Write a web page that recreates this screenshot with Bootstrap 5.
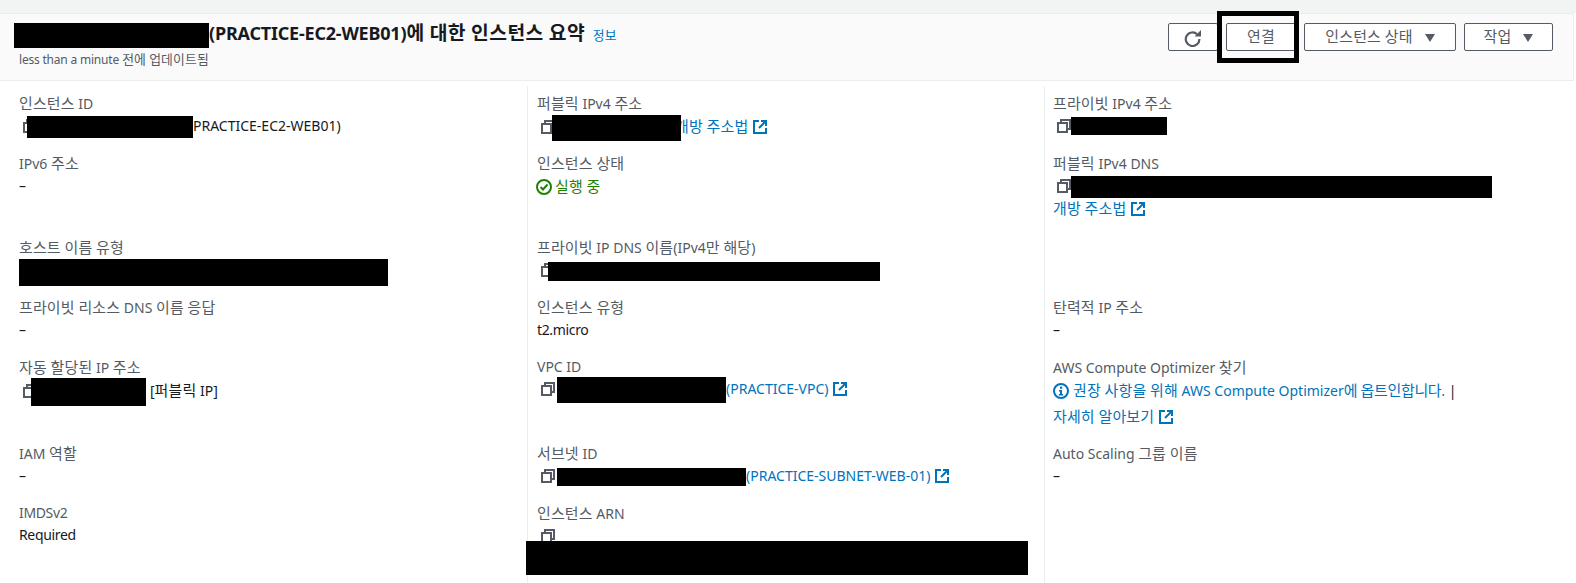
<!DOCTYPE html>
<html lang="ko">

<head>
  <meta charset="UTF-8" />
  <meta name="viewport" content="width=device-width, initial-scale=1.0" />
  <title>인스턴스 요약</title>
  <link href="https://cdn.jsdelivr.net/npm/bootstrap@5.3.0/dist/css/bootstrap.min.css" rel="stylesheet" />
  <script src="https://cdn.jsdelivr.net/npm/bootstrap@5.3.0/dist/js/bootstrap.bundle.min.js"></script>
  <style>
    html,
    body {
      height: 100%;
      overflow: hidden;
    }

    body {
      background: #fff;
      font-family: "Noto Sans", "Noto Sans CJK KR", sans-serif;
      font-size: 14px;
      line-height: 22px;
      color: #16191f;
    }

    a {
      color: #0073bb;
      text-decoration: none;
    }

    /* hangul runs: the reference font sets them about 1em wide */
    .ko {
      font-size: 1.07em;
      letter-spacing: .01em;
      word-spacing: -.02em;
    }

    .ko-tight {
      letter-spacing: -.3px;
    }

    .lat-tight {
      letter-spacing: -.35px;
    }

    .top-strip {
      height: 12.5px;
      background: #f2f3f3;
    }

    .summary-head {
      height: 68px;
      background: #fafafa;
      border-top: 1px solid #eaeded;
      border-bottom: 1px solid #eaeded;
      border-right: 1px solid #eaeded;
      margin-right: 2px;
      padding: 8px 20px 0 14px;
    }

    .summary-title {
      font-size: 18px;
      line-height: 22px;
      font-weight: 700;
      margin: 0;
    }

    .title-latin {
      letter-spacing: -.2px;
    }

    .title-ko {
      letter-spacing: .024em;
    }

    .info-link {
      font-size: 12px;
      font-weight: 400;
      margin-left: 3px;
    }

    .updated {
      font-size: 12px;
      line-height: 16px;
      color: #545b64;
      margin: 4px 0 0 5px;
    }

    .updated-latin {
      letter-spacing: -.2px;
    }

    .head-actions {
      margin-top: 1px;
    }

    .aws-btn {
      height: 28px;
      padding: 0 0 4px;
      background: #fff;
      border: 1px solid #545b64;
      border-radius: 2px;
      color: #545b64;
      font-size: 14px;
      line-height: 24px;
    }

    .btn-reload {
      width: 50px;
      padding: 1px 0 0;
    }

    .btn-connect {
      width: 70px;
    }

    .btn-state {
      width: 152px;
    }

    .btn-action {
      width: 89px;
    }

    .caret-down {
      display: inline-block;
      width: 0;
      height: 0;
      margin-left: 12px;
      border-left: 5.5px solid transparent;
      border-right: 5.5px solid transparent;
      border-top: 8px solid #545b64;
    }

    .callout-wrap {
      position: relative;
    }

    /* black marker drawn over the connect button */
    .callout-wrap::after {
      content: "";
      position: absolute;
      left: -9px;
      top: -12px;
      width: 82px;
      height: 52px;
      border: 5px solid #000;
    }

    .detail-grid {
      display: grid;
      grid-template-columns: 527px 517px 1fr;
      grid-template-rows: 59px 84px 60px 60px 86px 60px 1fr;
      margin-top: 5px;
      height: 497px;
    }

    .fld {
      padding: 7px 0 7px 19px;
      min-width: 0;
    }

    .fld-first {
      padding-top: 6px;
    }

    .fld-b {
      border-left: 1px solid #eaeded;
      padding-left: 9px;
    }

    .fld-c {
      border-left: 1px solid #eaeded;
      padding-left: 8px;
    }

    .fld-label {
      color: #545b64;
    }

    .fld-val {
      white-space: nowrap;
    }

    .link-line {
      line-height: 23px;
    }

    .learn-line {
      margin-top: 3px;
    }

    .copy-ic {
      width: 14px;
      height: 14px;
      margin-left: 4px;
      vertical-align: -2px;
    }

    .ext-ic {
      width: 14px;
      height: 14px;
      margin-left: 5px;
      vertical-align: -2px;
    }

    .state-ic {
      width: 16px;
      height: 16px;
      margin-right: 4px;
      vertical-align: -3px;
    }

    .ok-ic {
      margin-left: -1px;
      margin-right: 3px;
    }

    .text-run {
      color: #1d8102;
    }

    /* redacted values: black blocks which keep the line height at 22px */
    .mask {
      display: inline-block;
      position: relative;
      background: #000;
      vertical-align: top;
    }

    .mask-title {
      width: 195px;
      height: 25px;
      margin: 1px 0 -4px 0;
    }

    .mask-inst {
      width: 166px;
      height: 22px;
      margin: 1px 0 -1px -10px;
    }

    .mask-pub4 {
      width: 129px;
      height: 26px;
      margin: 0 0 -4px -3px;
    }

    .mask-priv4 {
      width: 96px;
      height: 18px;
      margin: 2px 0 2px 0;
    }

    .mask-pubdns {
      width: 421px;
      height: 22px;
      margin: 1px 0 -1px 0;
    }

    .mask-host {
      display: block;
      width: 369px;
      height: 27px;
      margin: 0 0 -5px 0;
    }

    .mask-privdns {
      width: 332px;
      height: 19px;
      margin: 3px 0 0 -7px;
    }

    .mask-auto {
      width: 115px;
      height: 28px;
      margin: -1px 4px -5px -6px;
    }

    .mask-vpc {
      width: 169px;
      height: 26px;
      margin: -1px 0 -3px 2px;
    }

    .mask-subnet {
      width: 189px;
      height: 18px;
      margin: 3px 0 1px 2px;
    }

    .mask-arn {
      display: block;
      width: 502px;
      height: 34px;
      margin: -6px 0 0 -11px;
    }

    .under-mask {
      margin-left: -6px;
    }
  </style>
</head>

<body>
  <div class="top-strip"></div>

  <div class="summary-head d-flex justify-content-between">
    <div>
      <h1 class="summary-title"><span class="mask mask-title"></span><span class="title-latin">(PRACTICE-EC2-WEB01)</span><span class="ko title-ko">에 대한 인스턴스 요약</span> <a href="#" class="info-link"><span class="ko">정보</span></a></h1>
      <p class="updated"><span class="updated-latin">less than a minute</span> <span class="ko">전에 업데이트됨</span></p>
    </div>
    <div class="d-flex gap-2 head-actions">
      <button type="button" class="aws-btn btn-reload">
        <svg width="18" height="18" viewBox="0 0 18 18" fill="none">
          <path d="M13.2 5.2A6.8 6.8 0 1 0 15.4 10" stroke="#545b64" stroke-width="2.2" />
          <path d="M17 1v6.4h-6.4z" fill="#545b64" />
        </svg>
      </button>
      <div class="callout-wrap"><button type="button" class="aws-btn btn-connect"><span class="ko">연결</span></button></div>
      <button type="button" class="aws-btn btn-state"><span class="ko">인스턴스 상태</span><span class="caret-down"></span></button>
      <button type="button" class="aws-btn btn-action"><span class="ko">작업</span><span class="caret-down"></span></button>
    </div>
  </div>

  <div class="detail-grid">
    <!-- row 1 -->
    <div class="fld fld-first">
      <div class="fld-label"><span class="ko">인스턴스</span> ID</div>
      <div class="fld-val"><svg class="copy-ic" viewBox="0 0 14 14" fill="none" stroke="#545b64" stroke-width="2"><rect x="1" y="4" width="9" height="9" /><path d="M4 3V1h9v9h-2" /></svg><span class="mask mask-inst"></span>PRACTICE-EC2-WEB01)</div>
    </div>
    <div class="fld fld-b fld-first">
      <div class="fld-label"><span class="ko">퍼블릭</span> IPv4 <span class="ko">주소</span></div>
      <div class="fld-val"><svg class="copy-ic" viewBox="0 0 14 14" fill="none" stroke="#545b64" stroke-width="2"><rect x="1" y="4" width="9" height="9" /><path d="M4 3V1h9v9h-2" /></svg><span class="mask mask-pub4"></span><a href="#" class="under-mask"><span class="ko">개방 주소법</span><svg class="ext-ic" viewBox="0 0 14 14" fill="none" stroke="#0073bb" stroke-width="2"><path d="M6 1H1v12h12V8" /><path d="M8 1h5v5M13 1L6 8" /></svg></a></div>
    </div>
    <div class="fld fld-c fld-first">
      <div class="fld-label"><span class="ko">프라이빗</span> IPv4 <span class="ko">주소</span></div>
      <div class="fld-val"><svg class="copy-ic" viewBox="0 0 14 14" fill="none" stroke="#545b64" stroke-width="2"><rect x="1" y="4" width="9" height="9" /><path d="M4 3V1h9v9h-2" /></svg><span class="mask mask-priv4"></span></div>
    </div>

    <!-- row 2 -->
    <div class="fld">
      <div class="fld-label">IPv6 <span class="ko">주소</span></div>
      <div class="fld-val">–</div>
    </div>
    <div class="fld fld-b">
      <div class="fld-label"><span class="ko">인스턴스 상태</span></div>
      <div class="fld-val text-run"><svg class="state-ic ok-ic" viewBox="0 0 16 16" fill="none" stroke="#1d8102" stroke-width="2"><circle cx="8" cy="8" r="7" /><path d="M4.5 8l2.5 2.5L11.5 5.5" /></svg><span class="ko">실행 중</span></div>
    </div>
    <div class="fld fld-c">
      <div class="fld-label"><span class="ko">퍼블릭</span> IPv4 DNS</div>
      <div class="fld-val"><svg class="copy-ic" viewBox="0 0 14 14" fill="none" stroke="#545b64" stroke-width="2"><rect x="1" y="4" width="9" height="9" /><path d="M4 3V1h9v9h-2" /></svg><span class="mask mask-pubdns"></span></div>
      <div class="link-line"><a href="#"><span class="ko">개방 주소법</span><svg class="ext-ic" viewBox="0 0 14 14" fill="none" stroke="#0073bb" stroke-width="2"><path d="M6 1H1v12h12V8" /><path d="M8 1h5v5M13 1L6 8" /></svg></a></div>
    </div>

    <!-- row 3 -->
    <div class="fld">
      <div class="fld-label"><span class="ko">호스트 이름 유형</span></div>
      <div class="fld-val"><span class="mask mask-host"></span></div>
    </div>
    <div class="fld fld-b">
      <div class="fld-label"><span class="ko">프라이빗</span> IP DNS <span class="ko">이름</span>(IPv4<span class="ko">만 해당</span>)</div>
      <div class="fld-val"><svg class="copy-ic" viewBox="0 0 14 14" fill="none" stroke="#545b64" stroke-width="2"><rect x="1" y="4" width="9" height="9" /><path d="M4 3V1h9v9h-2" /></svg><span class="mask mask-privdns"></span></div>
    </div>
    <div class="fld fld-c"></div>

    <!-- row 4 -->
    <div class="fld">
      <div class="fld-label"><span class="ko">프라이빗 리소스</span> DNS <span class="ko">이름 응답</span></div>
      <div class="fld-val">–</div>
    </div>
    <div class="fld fld-b">
      <div class="fld-label"><span class="ko">인스턴스 유형</span></div>
      <div class="fld-val lat-tight">t2.micro</div>
    </div>
    <div class="fld fld-c">
      <div class="fld-label"><span class="ko">탄력적</span> IP <span class="ko">주소</span></div>
      <div class="fld-val">–</div>
    </div>

    <!-- row 5 -->
    <div class="fld">
      <div class="fld-label"><span class="ko">자동 할당된</span> IP <span class="ko">주소</span></div>
      <div class="fld-val"><svg class="copy-ic" viewBox="0 0 14 14" fill="none" stroke="#545b64" stroke-width="2"><rect x="1" y="4" width="9" height="9" /><path d="M4 3V1h9v9h-2" /></svg><span class="mask mask-auto"></span>[<span class="ko">퍼블릭</span> IP]</div>
    </div>
    <div class="fld fld-b">
      <div class="fld-label">VPC ID</div>
      <div class="fld-val"><svg class="copy-ic" viewBox="0 0 14 14" fill="none" stroke="#545b64" stroke-width="2"><rect x="1" y="4" width="9" height="9" /><path d="M4 3V1h9v9h-2" /></svg><span class="mask mask-vpc"></span><a href="#">(PRACTICE-VPC)<svg class="ext-ic" viewBox="0 0 14 14" fill="none" stroke="#0073bb" stroke-width="2"><path d="M6 1H1v12h12V8" /><path d="M8 1h5v5M13 1L6 8" /></svg></a></div>
    </div>
    <div class="fld fld-c">
      <div class="fld-label">AWS Compute Optimizer <span class="ko">찾기</span></div>
      <div class="fld-val"><a href="#"><svg class="state-ic" viewBox="0 0 16 16"><circle cx="8" cy="8" r="7" fill="none" stroke="#0073bb" stroke-width="2" /><rect x="7" y="3.6" width="2.2" height="2.2" fill="#0073bb" /><path d="M6 7h3v4h1.2v1.4H5.8V11H7V8.4H6z" fill="#0073bb" /></svg><span class="ko">권장 사항을 위해</span> AWS Compute Optimizer<span class="ko ko-tight">에 옵트인합니다</span>.</a> |</div>
      <div class="learn-line"><a href="#"><span class="ko">자세히 알아보기</span><svg class="ext-ic" viewBox="0 0 14 14" fill="none" stroke="#0073bb" stroke-width="2"><path d="M6 1H1v12h12V8" /><path d="M8 1h5v5M13 1L6 8" /></svg></a></div>
    </div>

    <!-- row 6 -->
    <div class="fld">
      <div class="fld-label">IAM <span class="ko">역할</span></div>
      <div class="fld-val">–</div>
    </div>
    <div class="fld fld-b">
      <div class="fld-label"><span class="ko">서브넷</span> ID</div>
      <div class="fld-val"><svg class="copy-ic" viewBox="0 0 14 14" fill="none" stroke="#545b64" stroke-width="2"><rect x="1" y="4" width="9" height="9" /><path d="M4 3V1h9v9h-2" /></svg><span class="mask mask-subnet"></span><a href="#">(PRACTICE-SUBNET-WEB-01)<svg class="ext-ic" viewBox="0 0 14 14" fill="none" stroke="#0073bb" stroke-width="2"><path d="M6 1H1v12h12V8" /><path d="M8 1h5v5M13 1L6 8" /></svg></a></div>
    </div>
    <div class="fld fld-c">
      <div class="fld-label">Auto Scaling <span class="ko">그룹 이름</span></div>
      <div class="fld-val">–</div>
    </div>

    <!-- row 7 -->
    <div class="fld">
      <div class="fld-label lat-tight">IMDSv2</div>
      <div class="fld-val lat-tight">Required</div>
    </div>
    <div class="fld fld-b">
      <div class="fld-label"><span class="ko">인스턴스</span> ARN</div>
      <div class="fld-val"><svg class="copy-ic" viewBox="0 0 14 14" fill="none" stroke="#545b64" stroke-width="2"><rect x="1" y="4" width="9" height="9" /><path d="M4 3V1h9v9h-2" /></svg></div>
      <div class="mask mask-arn"></div>
    </div>
    <div class="fld fld-c"></div>
  </div>
</body>

</html>
